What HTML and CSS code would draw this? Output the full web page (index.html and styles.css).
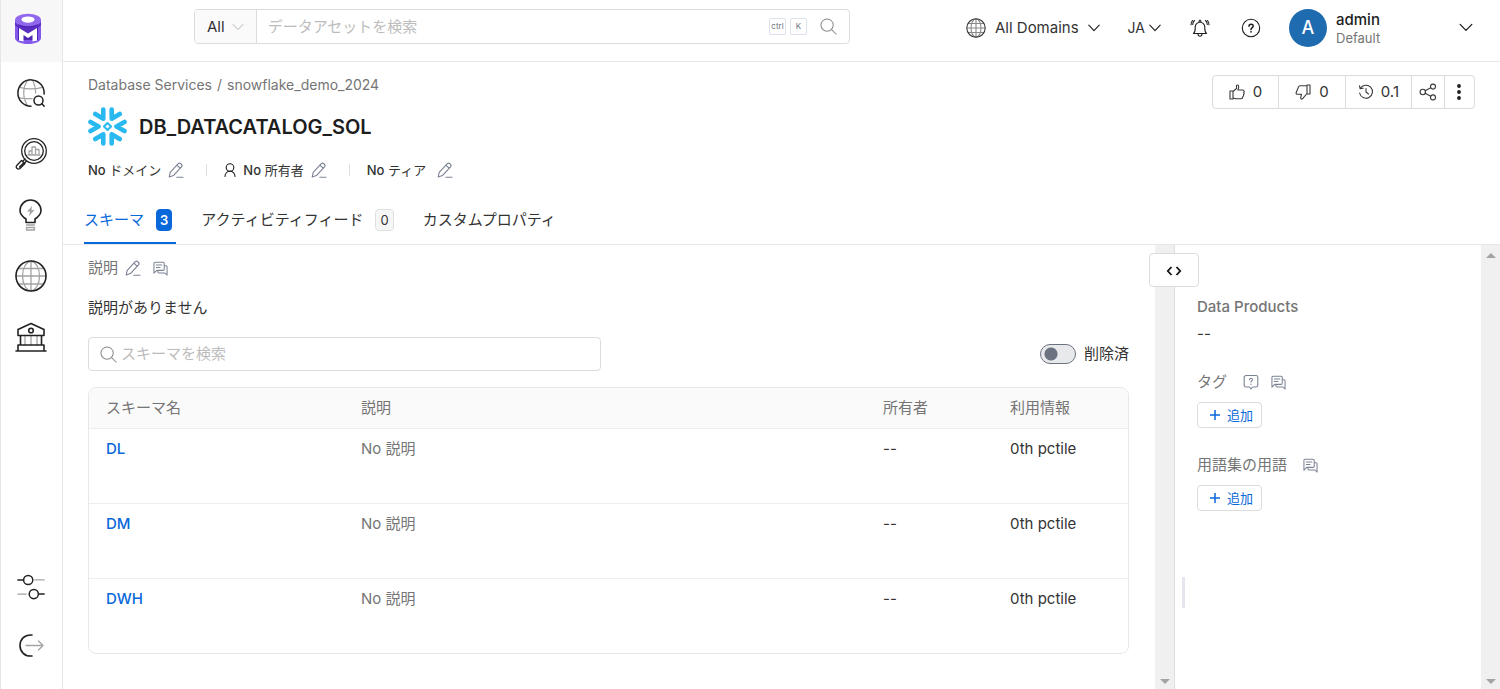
FILE: index.html
```html
<!DOCTYPE html>
<html lang="ja">
<head>
<meta charset="utf-8">
<meta name="viewport" content="width=device-width, initial-scale=1">
<title>DB_DATACATALOG_SOL</title>
<link rel="stylesheet" href="styles.css">
</head>
<body>
<svg class="sprite" aria-hidden="true">
  <symbol id="pencil" viewBox="0 0 16 16"><path d="M1.200 15l1-4.600L10.300 1.700a1.700 1.700 0 0 1 2.400 0l.8.8a1.700 1.700 0 0 1 0 2.400L5.400 13.600zM9 3.200l3.200 3.200M8.800 15.200H15"/></symbol>
  <symbol id="comments" viewBox="0 0 16 16"><path d="M1 13V2.500A1.200 1.200 0 0 1 2.200 1.300h8.600A1.200 1.200 0 0 1 12 2.500v6.300a1.200 1.200 0 0 1-1.200 1.200H4zM3.500 4.300h6M3.500 7h4M12 5h1.800A1.200 1.200 0 0 1 15 6.200V15l-2.200-2.200H6.500A1.200 1.200 0 0 1 5.300 11.600V10"/></symbol>
  <symbol id="magnifier" viewBox="0 0 18 18"><circle cx="7.500" cy="7.500" r="6.500"/><path d="M12.200 12.200l5 5"/></symbol>
  <symbol id="chevron" viewBox="0 0 12 8"><path d="M.8 1.200L6 6.600l5.200-5.400"/></symbol>
</svg>

<nav class="sidebar" aria-label="Main">
  <a class="brand" href="#" aria-label="OpenMetadata">
    <svg width="28" height="32" viewBox="0 0 28 32">
      <path d="M1 7v18c0 3.400 5.800 6 13 6s13-2.600 13-6V7z" fill="#8257ea"/>
      <path d="M4 10.500h20V27H4z" fill="#4f25b5"/>
      <path d="M1 9c2 3.500 7 5.500 13 5.500S25 12.500 27 9v3c-1 1-2 2-3 2.500L14 20 4 14.500C3 14 2 13 1 12z" fill="#5b2fc4"/>
      <ellipse cx="14" cy="7" rx="13" ry="6.200" fill="#9068ee"/>
      <ellipse cx="14" cy="6.600" rx="6.500" ry="3.200" fill="#fff"/>
      <path d="M5 15l9 5.500 9-5.500v12.500l-4.500 1V22L14 25l-4.500-3v6.500l-4.500-1z" fill="#fff"/>
    </svg>
  </a>
  <a class="nav-item" href="#" aria-label="Explore">
    <svg class="ink" width="30" height="30" viewBox="0 0 32 32"><g class="faint"><path d="M12 3c-5 7-5 18 0 26M18 3c2 4 3 8 3 13M4 10c7 2 17 2 24 0M3 21c4 1 9 1 14 1"/></g><path d="M16 30A14 14 0 1 1 30 17"/><circle cx="24" cy="24" r="4.800"/><path d="M27.500 27.500l2.500 2.500"/></svg>
  </a>
  <a class="nav-item" href="#" aria-label="Observability">
    <svg class="ink thin" width="32" height="32" viewBox="0 0 32 32"><circle cx="19" cy="13" r="12.300"/><circle cx="19" cy="13" r="9.300"/><g class="faint"><path d="M14 17v-4h3v4M17 17V9h3.500v8M20.500 17v-5.500H24V17M13 17h12"/></g><path d="M10 21l-2.500 2.500M11.500 23L9 25.500M6.500 22.500l3.500 3-5 5c-2 1.500-4.500-.5-3.500-2.700zM8.500 25l-4 4"/></svg>
  </a>
  <a class="nav-item" href="#" aria-label="Insights">
    <svg class="ink" width="32" height="32" viewBox="0 0 32 32"><path d="M11 23.500V20C8 18 5 15.500 5 11.500a10.500 10.500 0 0 1 21 0c0 4-3 6.500-6 8.500v3.500z"/><path class="faint fill" d="M17 7l-5 5.500h3L14 17l5.500-6h-3z"/><path class="faint" d="M11.500 26h8M11.500 28.500h8V31h-8z"/></svg>
  </a>
  <a class="nav-item" href="#" aria-label="Domains">
    <svg class="ink" width="32" height="32" viewBox="0 0 32 32"><g class="faint"><ellipse cx="16" cy="16" rx="8.500" ry="14.500"/><path d="M16 1v30M1 16h30M4 8.500h24M4 24h24"/></g><circle cx="16" cy="16" r="15"/></svg>
  </a>
  <a class="nav-item" href="#" aria-label="Governance">
    <svg class="ink" width="32" height="32" viewBox="0 0 32 32"><path class="faint" d="M10 15v9M16 15v9M22 15v9"/><path d="M3 14.500V8.500l13-6 13 6v6zM5.500 14.500V24M26.500 14.500V24M3 29.500V24h26v5.500M1 30h30"/><circle cx="16" cy="9.500" r="2.300"/></svg>
  </a>
  <a class="nav-item push" href="#" aria-label="Settings">
    <svg class="ink" width="30" height="30" viewBox="0 0 32 32"><path class="faint" d="M20 8.500h10M2 23.500h9"/><path d="M2 8.500h6M24 23.500h6"/><circle cx="13" cy="8.500" r="4.900"/><circle cx="19" cy="23.500" r="4.900"/></svg>
  </a>
  <a class="nav-item" href="#" aria-label="Logout">
    <svg class="ink" width="32" height="32" viewBox="0 0 32 32"><path d="M17 5C1 3.500 1 27.500 17 26"/><path class="faint" d="M11 15.500h17M23.500 11l4.500 4.500-4.500 4.500"/></svg>
  </a>
</nav>

<div class="app">
  <header class="topbar">
    <form class="global-search">
      <button class="scope" type="button">All <svg width="12" height="8"><use href="#chevron"/></svg></button>
      <input type="search" placeholder="データアセットを検索" aria-label="データアセットを検索">
      <kbd>ctrl</kbd><kbd>K</kbd>
      <button class="plain" type="button" aria-label="検索"><svg class="icon grey" width="17" height="17"><use href="#magnifier"/></svg></button>
    </form>
    <div class="tools">
      <button class="plain domains" type="button">
        <svg class="icon" width="20" height="20" viewBox="0 0 20 20"><g opacity=".6"><ellipse cx="10" cy="10" rx="5" ry="9"/><path d="M10 1v18M1 10h18M2.500 5.500h15M2.500 14.500h15"/></g><circle cx="10" cy="10" r="9.200"/></svg>
        <span>All Domains</span><svg class="icon dark" width="12" height="8"><use href="#chevron"/></svg>
      </button>
      <button class="plain lang" type="button">JA <svg class="icon dark" width="12" height="8"><use href="#chevron"/></svg></button>
      <button class="plain bell" type="button" aria-label="通知">
        <svg class="icon dark" width="20" height="20" viewBox="0 0 20 20"><path d="M3.500 15.500c2-1.500 1.700-3.500 1.700-6.500a4.800 4.800 0 0 1 9.600 0c0 3-.3 5 1.700 6.500zM8 16c0 3 4 3 4 0M9 4c0-2.600 2-2.600 2 0M4.500 2.500C3.300 3.500 2.800 5 2.700 6.500M15.500 2.500c1.200 1 1.700 2.500 1.800 4M2.500 2.500C1.500 3.700 1 5.200 1 6.700M17.500 2.500c1 1.200 1.500 2.700 1.500 4.200"/></svg>
      </button>
      <button class="plain help" type="button" aria-label="ヘルプ">
        <svg class="icon dark" width="20" height="20" viewBox="0 0 20 20"><circle cx="10" cy="10" r="8.700"/><path stroke-width="1.500" d="M8 8.200c0-2.700 4.200-2.600 4.200-.2 0 1.600-2.200 1.700-2.200 3.400M10 13.600v.3"/></svg>
      </button>
      <button class="plain user" type="button">
        <span class="avatar">A</span>
        <span class="who"><span class="name">admin</span><span class="team">Default</span></span>
        <svg class="icon dark" width="14" height="9"><use href="#chevron"/></svg>
      </button>
    </div>
  </header>

  <section class="page-head">
    <div class="head-row">
      <div class="heading">
        <nav class="crumbs" aria-label="Breadcrumb"><a href="#">Database Services</a><span>/</span><a href="#">snowflake_demo_2024</a></nav>
        <div class="title-row">
          <svg width="39" height="39" viewBox="0 0 39 39" fill="none" stroke="#29b9f1" stroke-width="4.600" stroke-linecap="round" stroke-linejoin="round">
            <rect x="17" y="17" width="5" height="5" stroke-width="2" transform="rotate(45 19.500 19.500)"/>
            <path d="M15.300 2.500v9.200L7.300 7M23.700 2.500v9.200l8-4.700M15.300 36.500v-9.200l-8 4.700M23.700 36.500v-9.200l8 4.700M2.500 15l8 4.500L2.500 24M36.500 15l-8 4.500 8 4.500"/>
          </svg>
          <h1>DB_DATACATALOG_SOL</h1>
        </div>
      </div>
      <div class="actions">
        <button type="button"><svg class="icon" width="16" height="16" viewBox="0 0 16 16"><path d="M1 7h3v8H1zM4 7.500l3.500-3V1.800c0-1.200 2.200-1 2.200.8 0 1.500-.5 2.600-.8 3.400h5c1.500 0 1.500 2 .8 2.500.7.600.5 1.800-.2 2.200.3.800 0 1.600-.7 2 0 1.300-.6 2-1.800 2H7L4 14"/></svg>0</button>
        <button type="button"><svg class="icon" width="16" height="16" viewBox="0 0 16 16"><path d="M15 1h-3v9h3zM12 1.800H5C4 1.800 3.700 2.400 3.500 3L1.200 8.500c-.4 1.200.2 1.800 1.300 1.800h4c-.3 1.200-.8 2.500-.8 3.700 0 1.500 1.800 1.300 2.200.3l4.100-4.800"/></svg>0</button>
        <button type="button"><svg class="icon" width="16" height="16" viewBox="0 0 16 16"><path d="M2.300 4.500A6.500 6.500 0 1 1 1.600 9M1.500 1.800l.7 3 3-.6M8 4.500V8l2.500 2"/></svg>0.1</button>
        <button type="button" aria-label="共有"><svg class="icon" width="18" height="18" viewBox="0 0 18 18"><circle cx="3.800" cy="9" r="2.700"/><circle cx="14" cy="3.600" r="2.500"/><circle cx="14" cy="14.400" r="2.500"/><path d="M6.200 7.800l5.500-3M6.200 10.200l5.500 3"/></svg></button>
        <button type="button" aria-label="その他"><svg width="4" height="16" viewBox="0 0 4 16" fill="#1d1d1d"><circle cx="2" cy="2" r="1.900"/><circle cx="2" cy="8" r="1.900"/><circle cx="2" cy="14" r="1.900"/></svg></button>
      </div>
    </div>
    <div class="meta">
      <span class="meta-item"><span><b>No</b> ドメイン</span><button class="plain" type="button" aria-label="ドメインを編集"><svg class="icon slate" width="16" height="16"><use href="#pencil"/></svg></button></span>
      <span class="meta-item"><svg class="icon dark" width="12" height="14" viewBox="0 0 12 14"><circle cx="6" cy="4.500" r="3.800"/><path d="M1 13.500C1 6.500 11 6.500 11 13.500"/></svg><span><b>No</b> 所有者</span><button class="plain" type="button" aria-label="所有者を編集"><svg class="icon slate" width="16" height="16"><use href="#pencil"/></svg></button></span>
      <span class="meta-item"><span class="tier"><b>No</b> ティア</span><button class="plain" type="button" aria-label="ティアを編集"><svg class="icon slate" width="16" height="16"><use href="#pencil"/></svg></button></span>
    </div>
    <div class="tabs" role="tablist">
      <button class="tab active" type="button" role="tab" aria-selected="true">スキーマ<span class="count">3</span></button>
      <button class="tab" type="button" role="tab">アクティビティフィード<span class="count">0</span></button>
      <button class="tab" type="button" role="tab">カスタムプロパティ</button>
    </div>
  </section>

  <div class="content">
    <main class="primary">
      <div class="desc-head"><h2>説明</h2>
        <button class="plain" type="button" aria-label="説明を編集"><svg class="icon slate" width="16" height="16"><use href="#pencil"/></svg></button>
        <button class="plain" type="button" aria-label="コメント"><svg class="icon slate" width="15" height="15"><use href="#comments"/></svg></button>
      </div>
      <p class="desc">説明がありません</p>
      <div class="filters">
        <div class="schema-search"><svg class="icon grey" width="17" height="17"><use href="#magnifier"/></svg><input type="search" placeholder="スキーマを検索" aria-label="スキーマを検索"></div>
        <label class="deleted"><input type="checkbox" role="switch">削除済</label>
      </div>
      <div class="table-wrap">
        <table>
          <thead><tr><th class="c-name">スキーマ名</th><th>説明</th><th class="c-owner">所有者</th><th class="c-usage">利用情報</th></tr></thead>
          <tbody>
            <tr><td><a href="#">DL</a></td><td class="muted">No 説明</td><td>--</td><td>0th pctile</td></tr>
            <tr><td><a href="#">DM</a></td><td class="muted">No 説明</td><td>--</td><td>0th pctile</td></tr>
            <tr><td><a href="#">DWH</a></td><td class="muted">No 説明</td><td>--</td><td>0th pctile</td></tr>
          </tbody>
        </table>
      </div>
    </main>
    <div class="scroll" aria-hidden="true"><i class="up"></i><i class="down"></i></div>
    <aside class="side">
      <button class="collapse" type="button" aria-label="パネルを切り替え"><svg width="16" height="10" viewBox="0 0 16 10" fill="none" stroke="#111" stroke-width="1.800"><path d="M5.500 1L1.800 5l3.700 4M10.500 1l3.700 4-3.700 4"/></svg></button>
      <span class="grip"></span>
      <div class="side-body">
        <section><h3>Data Products</h3><p>--</p></section>
        <section>
          <div class="side-head"><h3>タグ</h3>
            <button class="plain" type="button" aria-label="タグのリクエスト"><svg class="icon slate" width="16" height="16" viewBox="0 0 16 16"><path d="M3 1.500h10A1.800 1.800 0 0 1 14.800 3.300v8A1.800 1.800 0 0 1 13 13H9.500L8 15l-1.500-2H3a1.800 1.800 0 0 1-1.800-1.700v-8A1.800 1.800 0 0 1 3 1.500zM6.500 5.800c0-2 3-2 3-.2 0 1.200-1.500 1.200-1.500 2.500M8 10v.4"/></svg></button>
            <button class="plain" type="button" aria-label="タグのコメント"><svg class="icon slate" width="15" height="15"><use href="#comments"/></svg></button>
          </div>
          <button class="add" type="button"><svg width="10" height="10" viewBox="0 0 10 10" stroke="#0968da" stroke-width="1.500"><path d="M5 0v10M0 5h10"/></svg>追加</button>
        </section>
        <section>
          <div class="side-head"><h3>用語集の用語</h3>
            <button class="plain" type="button" aria-label="用語のコメント"><svg class="icon slate" width="15" height="15"><use href="#comments"/></svg></button>
          </div>
          <button class="add" type="button"><svg width="10" height="10" viewBox="0 0 10 10" stroke="#0968da" stroke-width="1.500"><path d="M5 0v10M0 5h10"/></svg>追加</button>
        </section>
      </div>
    </aside>
    <div class="scroll" aria-hidden="true"><i class="up"></i><i class="down"></i></div>
  </div>
</div>
</body>
</html>
```
FILE: styles.css
```css
* { box-sizing: border-box; }
body {
  margin: 0;
  display: flex;
  height: 100vh;
  background: #fff;
  color: #333;
  font: 15px/22px Inter, "Noto Sans CJK JP", sans-serif;
}
button, input { font: inherit; color: inherit; }
button { cursor: pointer; }
a { color: inherit; text-decoration: none; }
h1, h2, h3, p { margin: 0; font-weight: 400; }
h2, h3 { font-size: 15px; color: #757575; }
svg { display: block; flex: none; }
.sprite { position: absolute; width: 0; height: 0; }
.plain { display: flex; align-items: center; border: 0; padding: 0; background: none; }
.icon { fill: none; stroke: #3a3a3a; stroke-width: 1.1; stroke-linecap: round; stroke-linejoin: round; }
.icon.grey { stroke: #8c8c8c; }
.icon.dark { stroke: #1d1d1d; }
.icon.slate { stroke: #7b8294; }

/* Sidebar */
.sidebar {
  flex: none;
  width: 63px;
  display: flex;
  flex-direction: column;
  align-items: center;
  border: solid #e6e6e6;
  border-width: 0 1px;
  padding: 0 2px 15px 0;
}
.brand {
  flex: none;
  width: 61px;
  height: 62px;
  padding: 0 8px 4px 0;
  margin: 0 -2px 0 0;
  background: #f7f7f7;
  display: flex;
  align-items: center;
  justify-content: center;
}
.nav-item { height: 61px; display: flex; align-items: center; }
.push { margin-top: auto; }
.sidebar .nav-item:last-child { height: 57px; }
.ink { fill: none; stroke: #222; stroke-width: 1.6; stroke-linecap: round; stroke-linejoin: round; }
.ink.thin { stroke-width: 1.3; }
.faint { stroke: #a3a3a3; stroke-width: 1.3; }
.fill { fill: #a3a3a3; stroke: none; }

/* Top bar */
.app { flex: 1; min-width: 0; display: flex; flex-direction: column; }
.topbar {
  flex: none;
  height: 62px;
  display: flex;
  align-items: center;
  justify-content: space-between;
  gap: 24px;
  padding: 0 27px 6px 131px;
  border-bottom: 1px solid #e8e8e8;
}
.global-search {
  flex: 0 1 656px;
  height: 35px;
  margin-bottom: 2px;
  display: flex;
  align-items: center;
  border: 1px solid #dcdcdc;
  border-radius: 4px;
  padding-right: 12px;
  overflow: hidden;
}
.scope {
  align-self: stretch;
  display: flex;
  align-items: center;
  gap: 7px;
  padding: 0 12px;
  border: 0;
  border-right: 1px solid #dcdcdc;
  background: #fafafa;
}
.scope svg { fill: none; stroke: #b5b5b5; }
input[type="search"] {
  flex: 1;
  min-width: 0;
  border: 0;
  outline: 0;
  padding: 0;
  background: none;
}
.global-search input { padding-left: 11px; }
input::placeholder { color: #bcbcbc; opacity: 1; }
kbd {
  min-width: 17px;
  height: 17px;
  margin-right: 4px;
  border: 1px solid #dde3ec;
  border-radius: 2px;
  text-align: center;
  color: #6b7280;
  font: 8px/15px Inter, sans-serif;
}
.global-search .plain { margin-left: 9px; }
.tools { display: flex; align-items: center; }
.domains { gap: 9px; }
.lang { gap: 4px; margin-left: 28px; font-size: 14px; }
.bell { margin-left: 29px; }
.help { margin-left: 31px; }
.user { margin-left: 28px; width: 184px; gap: 9px; text-align: left; }
.avatar {
  width: 38px;
  height: 38px;
  border-radius: 50%;
  background: #1e6bb0;
  color: #fff;
  font-size: 18px;
  font-weight: 500;
  line-height: 38px;
  text-align: center;
}
.who { flex: 1; display: flex; flex-direction: column; padding-top: 2px; line-height: 19px; }
.name { font-weight: 500; color: #1d1d1d; }
.team { font-size: 13px; color: #757575; }

/* Page heading */
.page-head { flex: none; padding: 13px 25px 0; border-bottom: 1px solid #e8e8e8; }
.head-row { display: flex; justify-content: space-between; align-items: flex-start; gap: 24px; }
.crumbs { display: flex; gap: 5px; line-height: 20px; font-size: 14px; color: #757575; }
.title-row { display: flex; align-items: center; gap: 12px; margin-top: 12px; }
h1 { font-size: 20px; font-weight: 600; line-height: 28px; color: #1d1d1d; }
.actions { display: flex; border: 1px solid #dcdcdc; border-radius: 4px; }
.actions button {
  height: 32px;
  display: flex;
  align-items: center;
  gap: 8px;
  padding: 0 16px;
  border: 0;
  border-left: 1px solid #dcdcdc;
  background: none;
}
.actions button:first-child { border-left: 0; }
.actions button:nth-child(3) { padding: 0 12px; gap: 7px; }
.actions button:nth-child(4) { padding: 0 7px; }
.actions button:nth-child(5) { padding: 0 13px 0 12px; }
.meta { display: flex; align-items: center; margin-top: 14px; font-size: 13px; line-height: 20px; }
.meta b { font-weight: 500; }
.meta-item { display: flex; align-items: center; gap: 7px; }
.meta-item + .meta-item::before { content: ""; width: 1px; height: 12px; background: #e0e0e0; margin: 0 10px 0 22px; }
.meta-item .tier { margin-right: 4px; }
.tabs { display: flex; gap: 25px; margin: 16px 0 0 -4px; }
.tab {
  height: 48px;
  display: flex;
  align-items: center;
  gap: 12px;
  border: 0;
  border-bottom: 2px solid transparent;
  padding: 2px 4px 0 0;
  background: none;
}
.tab.active { color: #0968da; border-color: #0968da; }
.count {
  min-width: 18px;
  padding: 0 4px;
  border: 1px solid #e0e0e0;
  border-radius: 4px;
  background: #f6f6f6;
  font-size: 13px;
  line-height: 20px;
}
.active .count { min-width: 16px; padding: 0 3px; background: #0968da; border-color: #0968da; color: #fff; font-weight: 600; }

/* Content */
.content { flex: 1; min-height: 0; display: flex; }
.primary { flex: 1; min-width: 0; padding: 12px 26px 0 25px; overflow: hidden; }
.desc-head { display: flex; align-items: center; gap: 7px; }
.desc-head button + button { margin-left: 5px; }
.desc { margin-top: 18px; }
.filters { display: flex; align-items: center; justify-content: space-between; margin-top: 18px; }
.schema-search {
  width: calc(50% - 8px);
  height: 34px;
  display: flex;
  align-items: center;
  gap: 4px;
  padding: 0 11px;
  border: 1px solid #dcdcdc;
  border-radius: 4px;
}
.deleted { display: flex; align-items: center; gap: 8px; }
.deleted input {
  appearance: none;
  width: 36px;
  height: 20px;
  margin: 0;
  border: 1px solid #6b7280;
  border-radius: 10px;
  background: radial-gradient(circle at 10px 9px, #6b7280 6px, #e8e9eb 7px);
}
.table-wrap { margin-top: 16px; border: 1px solid #e8e8e8; border-radius: 8px; overflow: hidden; }
table { width: 100%; border-collapse: collapse; table-layout: fixed; }
th, td { text-align: left; vertical-align: top; padding: 9px 0 8px 17px; }
th { height: 40px; font-weight: 400; color: #757575; background: #fafafa; }
td { height: 75px; border-top: 1px solid #eee; }
td a { color: #0968da; font-weight: 500; }
.muted { color: #757575; }
.c-name { width: 255px; }
.c-owner { width: 127px; }
.c-usage { width: 135px; }

.scroll { flex: none; width: 19px; display: flex; flex-direction: column; justify-content: space-between; align-items: center; padding: 8px 0 5px; background: #f0f0f0; }
.scroll i { border: 5px solid transparent; }
.scroll .up { border-top: 0; border-bottom-color: #a3a3a3; }
.scroll .down { border-bottom: 0; border-top-color: #a3a3a3; }

/* Side panel */
.side { position: relative; flex: none; width: 307px; border-left: 1px solid #e0e0e0; }
.collapse {
  position: absolute;
  left: -26px;
  top: 8px;
  width: 50px;
  height: 34px;
  display: flex;
  align-items: center;
  justify-content: center;
  padding: 2px 0 0;
  border: 1px solid #dcdcdc;
  border-radius: 4px;
  background: #fff;
}
.grip { position: absolute; left: 7px; top: 332px; width: 3px; height: 31px; background: #e6e6ee; }
.side-body { display: flex; flex-direction: column; gap: 26px; padding: 51px 22px 0; }
.side-body section:first-child h3 { font-weight: 500; }
.side-body p { margin-top: 5px; }
.side-head { display: flex; align-items: center; gap: 12px; }
.side-head h3 { margin-right: 4px; }
.add {
  height: 26px;
  display: flex;
  align-items: center;
  gap: 7px;
  margin-top: 9px;
  padding: 0 8px 0 12px;
  border: 1px solid #dcdcdc;
  border-radius: 4px;
  background: #fff;
  color: #0968da;
  font-size: 13px;
}
```
